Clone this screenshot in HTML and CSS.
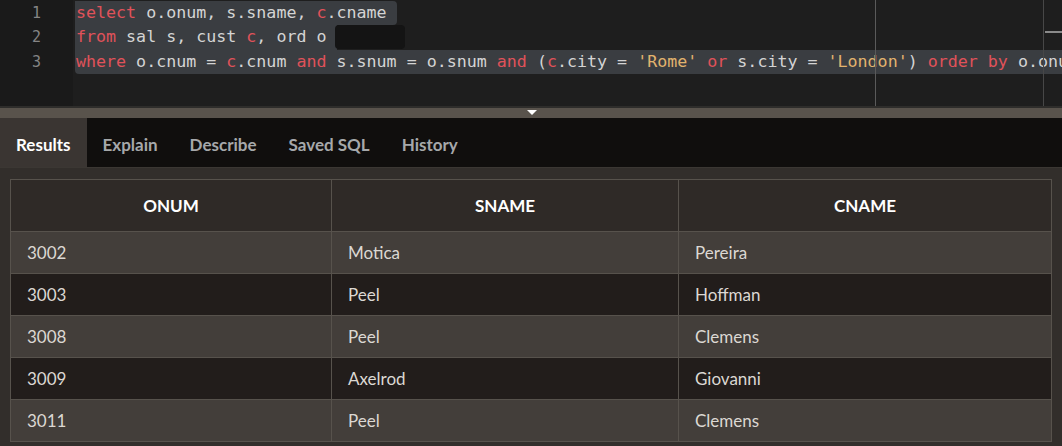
FILE: index.html
```
<!DOCTYPE html>
<html>
<head>
<meta charset="utf-8">
<link rel="stylesheet" href="styles.css">
</head>
<body>
<div class="editor">
  <div class="gutter">
    <div class="ln">1</div>
    <div class="ln">2</div>
    <div class="ln">3</div>
  </div>
  <div class="code">
    <div class="line"><span class="sel sel1"><span class="k">select</span> o.onum, s.sname, <span class="k">c</span>.cname </span></div>
    <div class="line"><span class="sel sel2"><span class="k">from</span> sal s, cust <span class="k">c</span>, ord o </span><span class="corner"></span></div>
    <div class="line"><span class="sel sel3"><span class="k">where</span> o.cnum = <span class="k">c</span>.cnum <span class="k">and</span> s.snum = o.snum <span class="k">and</span> (<span class="k">c</span>.city = <span class="s">'Rome'</span> <span class="k">or</span> s.city = <span class="s">'London'</span>) <span class="k">order</span> <span class="k">by</span> o.onum                </span></div>
    <div class="ruler"></div>
    <div class="vscroll"></div>
    <div class="thumb"></div>
  </div>
</div>
<div class="splitter"><span class="tri"></span></div>
<div class="tabs">
  <div class="tab active">Results</div>
  <div class="tab">Explain</div>
  <div class="tab">Describe</div>
  <div class="tab">Saved SQL</div>
  <div class="tab">History</div>
</div>
<div class="results">
  <table class="grid">
    <thead>
      <tr><th class="c1">ONUM</th><th class="c2">SNAME</th><th class="c3">CNAME</th></tr>
    </thead>
    <tbody>
      <tr class="odd"><td>3002</td><td>Motica</td><td>Pereira</td></tr>
      <tr class="even"><td>3003</td><td>Peel</td><td>Hoffman</td></tr>
      <tr class="odd"><td>3008</td><td>Peel</td><td>Clemens</td></tr>
      <tr class="even"><td>3009</td><td>Axelrod</td><td>Giovanni</td></tr>
      <tr class="odd"><td>3011</td><td>Peel</td><td>Clemens</td></tr>
    </tbody>
  </table>
</div>
</body>
</html>
```
FILE: styles.css
```
html, body {
  margin: 0;
  padding: 0;
}
body {
  width: 1062px;
  height: 446px;
  overflow: hidden;
  background: #322e2b;
  font-family: Lato, "Open Sans", sans-serif;
}
.editor {
  height: 106px;
  display: flex;
  background: #1e1e1e;
  border-bottom: 2px solid #2e2d2b;
}
.gutter {
  width: 73px;
  padding-top: 1px;
  background: #1a1a1a;
  font-family: "DejaVu Sans Mono", monospace;
  font-size: 15px;
  color: #858585;
}
.ln {
  height: 24.4px;
  line-height: 24.4px;
  width: 41px;
  text-align: right;
}
.code {
  flex: 1;
  position: relative;
  overflow: hidden;
  padding-left: 2px;
  padding-top: 1px;
  font-family: "DejaVu Sans Mono", monospace;
  font-size: 16.65px;
  color: #d4d4d4;
}
.line {
  height: 24.4px;
  line-height: 24.4px;
  display: flex;
  white-space: pre;
}
.sel {
  background: #3a3d41;
  padding-left: 1px;
}
.sel1 {
  border-radius: 0 4px 4px 0;
}
.sel2 {
  border-radius: 0;
}
.sel3 {
  border-radius: 0 0 0 4px;
}
.corner {
  display: inline-block;
  width: 70px;
  height: 24px;
  margin-left: -2px;
  background: #141414;
  border-radius: 4px;
}
.k { color: #e0525a; }
.s { color: #e2b36e; }
.ruler {
  position: absolute;
  left: 802px;
  top: 0;
  width: 1px;
  height: 106px;
  background: #5a5a5a;
}
.vscroll {
  position: absolute;
  left: 970px;
  top: 0;
  width: 1px;
  height: 106px;
  background: #474747;
}
.thumb {
  position: absolute;
  left: 972px;
  top: 31px;
  width: 20px;
  height: 2px;
  background: #8a8a8a;
}
.splitter {
  height: 10px;
  background: #59534c;
  position: relative;
}
.tri {
  position: absolute;
  left: 527px;
  top: 2px;
  width: 0;
  height: 0;
  border-left: 5px solid transparent;
  border-right: 5px solid transparent;
  border-top: 5px solid #ffffff;
}
.tabs {
  height: 49px;
  background: #100e0d;
  display: flex;
  border-bottom: 1px solid #3b3733;
}
.tab {
  padding: 3px 16px 0 16px;
  display: flex;
  align-items: center;
  font-size: 17px;
  font-weight: bold;
  color: #a6a8aa;
}
.tab.active {
  background: #3a3532;
  color: #ffffff;
}
.results {
  padding: 11px 10px 0 10px;
}
.grid {
  width: 1042px;
  border-collapse: collapse;
  border: 1px solid #57524c;
  font-size: 17px;
}
.grid th {
  height: 51px;
  padding: 0;
  background: #2f2a27;
  color: #ffffff;
  font-weight: bold;
  text-align: center;
  border: 1px solid #57524c;
}
.c1 { width: 320px; }
.c2 { width: 346px; }
.grid td {
  height: 41px;
  padding: 0 0 0 16px;
  color: #dcd8d3;
  border: 1px solid #57524c;
}
.odd td { background: #433e3a; }
.even td { background: #221d1b; }
```
